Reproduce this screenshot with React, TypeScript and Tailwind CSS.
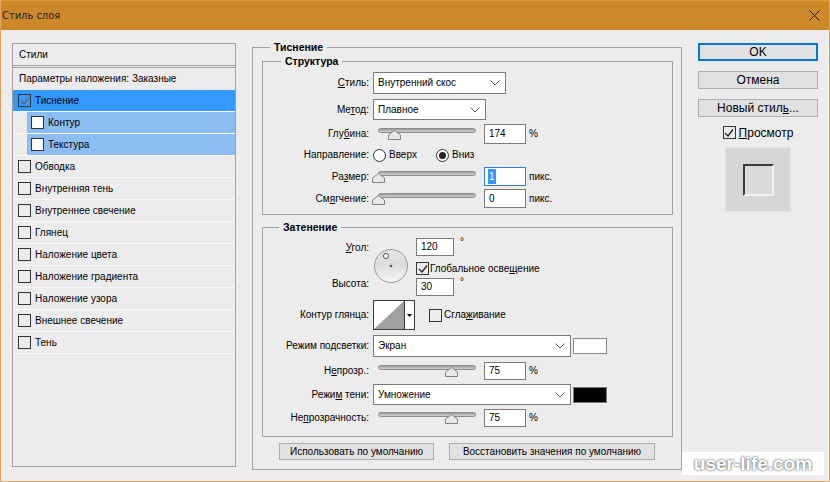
import type { ReactNode } from "react"

function Check({ color = "#222" }: { color?: string }) {
  return (
    <svg width="10" height="10" viewBox="0 0 10 10" className="block">
      <path d="M1 5 L4 8 L9 1.5" fill="none" stroke={color} strokeWidth="1.3" />
    </svg>
  )
}

function Box({ checked, white, color }: { checked?: boolean; white?: boolean; color?: string }) {
  return (
    <span
      className={`w-[13px] h-[13px] shrink-0 border border-[#333] flex items-center justify-center ${
        white ? "bg-white" : "bg-transparent"
      }`}
    >
      {checked && <Check color={color} />}
    </span>
  )
}

function Chevron() {
  return (
    <svg width="10" height="6" viewBox="0 0 10 6" className="block">
      <path d="M0.5 0.5 L5 5 L9.5 0.5" fill="none" stroke="#555" />
    </svg>
  )
}

function Select({ value, className }: { value: string; className: string }) {
  return (
    <div
      className={`bg-white border border-[#7a7a7a] flex items-center justify-between pl-[4px] pr-[5px] ${className}`}
    >
      <span>{value}</span>
      <Chevron />
    </div>
  )
}

function Input({ value, className = "w-[42px]" }: { value: string; className?: string }) {
  return (
    <div className={`h-full bg-white border border-[#7a7a7a] pl-[4px] flex items-center ${className}`}>
      {value}
    </div>
  )
}

function Slider({ pos }: { pos: number }) {
  return (
    <div className="relative w-[98px] h-[12px] ml-[5px] shrink-0">
      <div className="h-[5px] rounded-full border border-[#8c8c8c] bg-linear-to-b from-[#9c9c9c] to-[#d2d2d2]" />
      <svg
        className="absolute top-[2px]"
        style={{ left: pos - 6 }}
        width="13"
        height="10"
        viewBox="0 0 13 10"
      >
        <path d="M0.5 9.5 V5 L6.5 0.5 L12.5 5 V9.5 Z" fill="#e8e8e8" stroke="#828282" />
      </svg>
    </div>
  )
}

function Row({ label, children, className }: { label: ReactNode; children: ReactNode; className: string }) {
  return (
    <div className={`flex items-center ${className}`}>
      <div className="w-[106px] text-right shrink-0">{label}</div>
      <div className="ml-[4px] h-full flex items-center">{children}</div>
    </div>
  )
}

function Radio({ on, label }: { on?: boolean; label: string }) {
  return (
    <div className="flex items-center">
      <span className="w-[13px] h-[13px] rounded-full border border-[#333] bg-white flex items-center justify-center">
        {on && <span className="w-[7px] h-[7px] rounded-full bg-[#222]" />}
      </span>
      <span className="ml-[3px]">{label}</span>
    </div>
  )
}

const effects = [
  { name: "Тиснение", checked: true, selected: true },
  { name: "Контур", sub: true },
  { name: "Текстура", sub: true },
  { name: "Обводка" },
  { name: "Внутренняя тень" },
  { name: "Внутреннее свечение" },
  { name: "Глянец" },
  { name: "Наложение цвета" },
  { name: "Наложение градиента" },
  { name: "Наложение узора" },
  { name: "Внешнее свечение" },
  { name: "Тень" },
]

export default function App() {
  return (
    <div className="relative w-[830px] h-[482px] overflow-hidden flex flex-col bg-[#ececec] font-['Liberation_Sans',Arial,sans-serif] text-[10px] leading-[14px] text-black border-x border-b border-[#e2a55c]">
      {/* title bar */}
      <div className="h-[30px] shrink-0 bg-[#cc8829] border-t border-[#d99a45] flex items-center justify-between pl-[1px] pr-[9px]">
        <span className="font-['Liberation_Sans_Narrow','DejaVu_Sans_Condensed',sans-serif] text-[11px] text-[#222]">
          Стиль слоя
        </span>
        <svg width="11" height="11" viewBox="0 0 11 11">
          <path d="M0.5 0.5 L10.5 10.5 M10.5 0.5 L0.5 10.5" stroke="#222" strokeWidth="1" />
        </svg>
      </div>

      <div className="flex items-start pl-[11px]">
        {/* styles list */}
        <div className="mt-[13px] w-[224px] h-[424px] border border-[#a0a0a0] flex flex-col">
          <div className="h-[22px] border-b border-[#a0a0a0] pl-[6px] flex items-center">Стили</div>
          <div className="mt-[1px] border-t border-[#a0a0a0]" />
          <div className="h-[22px] pl-[6px] flex items-center">Параметры наложения: Заказные</div>
          {effects.map((e) => (
            <div key={e.name} className="h-[22px] border-b border-[#fafafa] flex">
              <div
                className={`flex-1 flex items-center ${
                  e.selected
                    ? "bg-[#3399ff] pl-[5px]"
                    : e.sub
                    ? "bg-[#8cbdf2] ml-[14px] pl-[4px]"
                    : "pl-[5px]"
                }`}
              >
                <Box checked={e.checked} white={e.sub} color="#666" />
                <span className="ml-[4px]">{e.name}</span>
              </div>
            </div>
          ))}
        </div>

        {/* bevel group */}
        <fieldset className="ml-[16px] mt-[10px] w-[430px] border border-[#a0a0a0] p-0 pb-[9px] m-0">
          <legend className="ml-[17px] px-[4px] font-bold text-[10.5px] leading-[14px]">Тиснение</legend>

          <fieldset className="ml-[9px] w-[411px] border border-[#a0a0a0] p-0 pb-[6px]">
            <legend className="ml-[18px] px-[4px] font-bold text-[10.5px] leading-[14px]">Структура</legend>
            <Row className="mt-[4px] h-[22px]" label={<><u>С</u>тиль:</>}>
              <Select value="Внутренний скос" className="w-[133px] h-full" />
            </Row>
            <Row className="mt-[5px] h-[21px]" label={<>Ме<u>т</u>од:</>}>
              <Select value="Плавное" className="w-[113px] h-full" />
            </Row>
            <Row className="mt-[4px] h-[20px]" label={<>Глу<u>б</u>ина:</>}>
              <Slider pos={16} />
              <div className="ml-[8px] h-full flex">
                <Input value="174" />
              </div>
              <span className="ml-[3px]">%</span>
            </Row>
            <Row className="mt-[4px] h-[14px]" label="Направление:">
              <div className="w-[63px]">
                <Radio label="Вверх" />
              </div>
              <Radio on label="Вниз" />
            </Row>
            <Row className="mt-[5px] h-[19px]" label={<>Ра<u>з</u>мер:</>}>
              <Slider pos={0} />
              <div className="ml-[8px] h-full w-[42px] bg-white border border-[#2f7fd6] pl-[3px] flex items-center">
                <span className="h-[15px] px-[1px] bg-[#3399ff] text-white flex items-center">1</span>
              </div>
              <span className="ml-[3px]">пикс.</span>
            </Row>
            <Row className="mt-[3px] h-[19px]" label={<>См<u>я</u>гчение:</>}>
              <Slider pos={0} />
              <div className="ml-[8px] h-full flex">
                <Input value="0" />
              </div>
              <span className="ml-[3px]">пикс.</span>
            </Row>
          </fieldset>

          <fieldset className="ml-[9px] mt-[5px] w-[411px] border border-[#a0a0a0] p-0 pb-[9px]">
            <legend className="ml-[16px] px-[4px] font-bold text-[10.5px] leading-[14px]">Затенение</legend>

            <div className="mt-[4px] flex items-start">
              <div className="w-[106px] shrink-0 text-right flex flex-col pt-[3px]">
                <span>
                  <u>У</u>гол:
                </span>
                <span className="mt-[22px]">Высота:</span>
              </div>
              <svg className="ml-[5px] mt-[11px] shrink-0" width="34" height="34" viewBox="0 0 34 34">
                <defs>
                  <linearGradient id="dial" x1="0" y1="0" x2="0" y2="1">
                    <stop offset="0" stopColor="#e6e6e6" />
                    <stop offset="0.45" stopColor="#dcdcdc" />
                    <stop offset="1" stopColor="#f6f6f6" />
                  </linearGradient>
                </defs>
                <circle cx="17" cy="17" r="16.5" fill="url(#dial)" stroke="#9a9a9a" />
                <circle cx="12" cy="7" r="2.6" fill="#fff" stroke="#555" />
                <circle cx="17" cy="17" r="1.3" fill="#555" />
              </svg>
              <div className="ml-[8px] flex flex-col">
                <div className="flex h-[18px]">
                  <Input value="120" className="w-[38px]" />
                  <span className="ml-[6px] -mt-[3px]">°</span>
                </div>
                <div className="mt-[6px] h-[13px] flex items-center">
                  <Box checked />
                  <span className="ml-[1px]">
                    Глобальное осве<u>щ</u>ение
                  </span>
                </div>
                <div className="mt-[3px] flex h-[18px]">
                  <Input value="30" className="w-[38px]" />
                  <span className="ml-[6px] -mt-[3px]">°</span>
                </div>
              </div>
            </div>

            <Row className="mt-[4px] h-[30px]" label="Контур глянца:">
              <div className="w-[42px] h-[30px] border border-[#3c3c3c] bg-white flex">
                <svg width="30" height="28" viewBox="0 0 30 28" className="block">
                  <path d="M0 28 L30 0 L30 28 Z" fill="#a0a0a0" />
                </svg>
                <div className="w-[10px] border-l border-[#3c3c3c] flex items-center justify-center">
                  <svg width="5" height="3" viewBox="0 0 5 3">
                    <path d="M0 0 H5 L2.5 3 Z" fill="#000" />
                  </svg>
                </div>
              </div>
              <div className="ml-[14px] flex items-center">
                <Box />
                <span className="ml-[2px]">
                  Сгла<u>ж</u>ивание
                </span>
              </div>
            </Row>

            <Row className="mt-[5px] h-[22px]" label={<>Режим по<u>д</u>светки:</>}>
              <Select value="Экран" className="w-[198px] h-full" />
              <div className="ml-[2px] w-[34px] h-[16px] border border-[#8a8a8a] bg-white" />
            </Row>
            <Row className="mt-[5px] h-[18px]" label={<>Н<u>е</u>прозр.:</>}>
              <Slider pos={73} />
              <div className="ml-[8px] h-full flex">
                <Input value="75" />
              </div>
              <span className="ml-[3px]">%</span>
            </Row>
            <Row className="mt-[4px] h-[21px]" label={<>Режи<u>м</u> тени:</>}>
              <Select value="Умножение" className="w-[198px] h-full" />
              <div className="ml-[2px] w-[34px] h-[16px] border border-[#777] bg-black" />
            </Row>
            <Row className="mt-[4px] h-[18px]" label={<>Не<u>п</u>розрачность:</>}>
              <Slider pos={73} />
              <div className="ml-[8px] h-full flex">
                <Input value="75" />
              </div>
              <span className="ml-[3px]">%</span>
            </Row>
          </fieldset>

          <div className="mt-[6px] flex justify-center gap-[15px]">
            <button className="w-[155px] h-[17px] bg-[#e1e1e1] border border-[#adadad] flex items-center justify-center">
              Использовать по умолчанию
            </button>
            <button className="w-[206px] h-[17px] bg-[#e1e1e1] border border-[#adadad] flex items-center justify-center">
              Восстановить значения по умолчанию
            </button>
          </div>
        </fieldset>

        {/* right column */}
        <div className="ml-[16px] mt-[13px] w-[120px] flex flex-col text-[12px]">
          <button className="h-[18px] bg-[#e1e1e1] border-2 border-[#0078d7] flex items-center justify-center">
            OK
          </button>
          <button className="mt-[10px] h-[18px] bg-[#e1e1e1] border border-[#adadad] flex items-center justify-center">
            Отмена
          </button>
          <button className="mt-[10px] h-[18px] bg-[#e1e1e1] border border-[#adadad] flex items-center justify-center">
            Новый стил<u>ь</u>...
          </button>
          <div className="mt-[9px] h-[13px] flex items-center justify-center">
            <Box checked />
            <span className="ml-[3px]">
              <u>П</u>росмотр
            </span>
          </div>
          <div className="mt-[8px] self-center w-[66px] h-[65px] bg-[#d6d6d6] border border-[#e4e4e4] flex items-center justify-center">
            <div className="w-[31px] h-[32px] bg-[#dadada] border-2 border-t-[#3a3a3a] border-l-[#3a3a3a] border-b-[#f2f2f2] border-r-[#f2f2f2]" />
          </div>
        </div>
      </div>

      {/* watermark */}
      <div className="absolute right-[5px] bottom-[6px] w-[142px] h-[23px] bg-white flex items-center justify-center">
        <span className="font-bold text-[19px] text-white [text-shadow:0_0_3px_#555,0_0_1px_#777]">
          user-life.com
        </span>
      </div>
    </div>
  )
}
